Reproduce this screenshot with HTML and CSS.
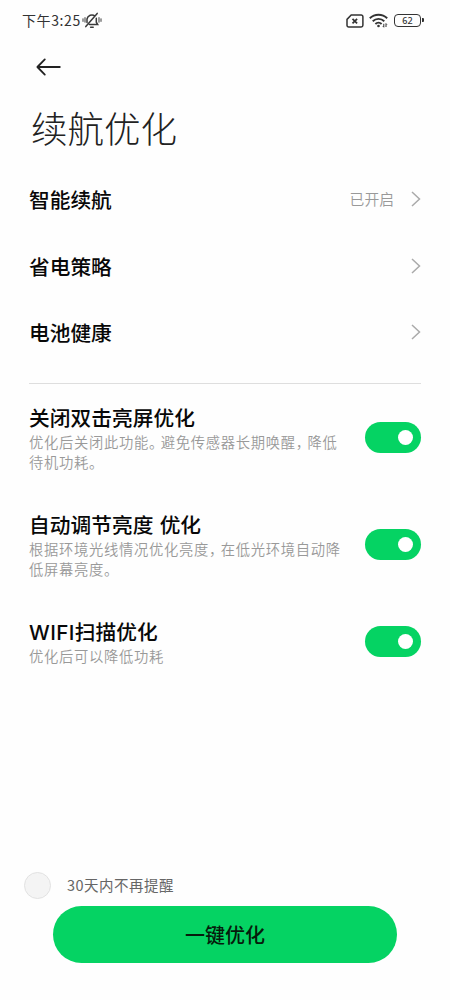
FILE: index.html
```html
<!DOCTYPE html>
<html lang="zh-CN">
<head>
<meta charset="utf-8">
<title>续航优化</title>
<link rel="stylesheet" href="styles.css">
</head>
<body>
<div class="screen">
  <header class="status">
    <span class="time">下午3:25</span>
    <svg class="bell" width="20" height="17" viewBox="0 0 20 17" fill="none" stroke="#3a3a3a" stroke-width="1.5" stroke-linecap="round">
      <path d="M5 10.5V7a5 5 0 0 1 8-3M14.3 6.2v4l1.4 2.4H7.5M3.8 14.6L15.2 1.4M8.6 15.2h2.6"/>
      <path d="M1 6.8v2.6M3 5.6v4.6M17 5.6v4.6M19 6.8v2.6" stroke-width="1"/>
    </svg>
    <div class="status-right">
      <svg width="18" height="14" viewBox="0 0 18 14" fill="none" stroke="#333" stroke-width="1.5">
        <path d="M5.2 1H15.2a1.7 1.7 0 0 1 1.7 1.7v8.5a1.7 1.7 0 0 1-1.7 1.7H2.7A1.7 1.7 0 0 1 1 11.200V5.400z"/>
        <path d="M6.500 4.800l4.600 4.600M11.100 4.800L6.500 9.400" stroke-width="1.7"/>
      </svg>
      <svg class="wifi" width="20" height="15" viewBox="0 0 20 15" fill="none" stroke="#333" stroke-width="1.9">
        <path d="M.8 5.200a12.500 12.500 0 0 1 17.400 0M3.700 8.200a8.500 8.500 0 0 1 11.600 0M6.400 11a4.500 4.500 0 0 1 6.200 0"/>
        <circle cx="9.500" cy="13" r="1.300" fill="#333" stroke="none"/>
        <path d="M14.800 10.800v3.400M17 10.600v3.400M13.900 13.200l.9 1M17 10.600l.9 1" stroke-width="1"/>
      </svg>
      <span class="battery">62</span>
    </div>
  </header>
  <svg class="back" width="26" height="18" viewBox="0 0 26 18" fill="none" stroke="#222" stroke-width="1.800" stroke-linecap="round" stroke-linejoin="round"><path d="M23.800 9H1.500M8.800 1.400L1.400 9L8.800 16.600"/></svg>
  <h1 class="title">续航优化</h1>
  <nav class="links">
    <a class="link"><span class="name">智能续航</span><span class="value">已开启</span><svg class="chevron" width="10" height="16" viewBox="0 0 10 16"><path d="M1 1L8.500 8L1 15"/></svg></a>
    <a class="link"><span class="name">省电策略</span><svg class="chevron" width="10" height="16" viewBox="0 0 10 16"><path d="M1 1L8.500 8L1 15"/></svg></a>
    <a class="link"><span class="name">电池健康</span><svg class="chevron" width="10" height="16" viewBox="0 0 10 16"><path d="M1 1L8.500 8L1 15"/></svg></a>
  </nav>
  <main class="options">
    <section class="option">
      <div class="copy"><h2 class="name">关闭双击亮屏优化</h2><p class="desc">优化后关闭此功能<span class="punct">。</span>避免传感器长期唤醒<span class="punct">，</span>降低<br>待机功耗。</p></div>
      <span class="toggle"></span>
    </section>
    <section class="option">
      <div class="copy"><h2 class="name">自动调节亮度 优化</h2><p class="desc">根据环境光线情况优化亮度<span class="punct">，</span>在低光环境自动降<br>低屏幕亮度。</p></div>
      <span class="toggle"></span>
    </section>
    <section class="option">
      <div class="copy"><h2 class="name"><span class="latin">WIFI</span>扫描优化</h2><p class="desc">优化后可以降低功耗</p></div>
      <span class="toggle"></span>
    </section>
  </main>
  <footer class="footer">
    <label class="remind"><span class="radio"></span><span>30天内不再提醒</span></label>
    <button class="primary">一键优化</button>
  </footer>
</div>
</body>
</html>
```
FILE: styles.css
```css
* { box-sizing: border-box; margin: 0; padding: 0; }
body { background: #fefefe; font-family: "Noto Sans CJK SC", sans-serif; color: #080808; }
.screen { width: 450px; height: 1000px; display: flex; flex-direction: column; }
svg { display: block; flex: none; }
.status { height: 41px; padding: 0 28px 0 22px; display: flex; align-items: center; flex: none; }
.time { font-size: 14px; letter-spacing: .6px; color: #333; line-height: 20px; padding-bottom: 2px; white-space: nowrap; }
.bell { margin-left: 1px; }
.status-right { margin-left: auto; display: flex; align-items: center; gap: 5px; }
.battery { position: relative; width: 27px; height: 13px; margin-right: 1px; border: 1.5px solid #333; border-radius: 4px; font: 500 9px/11px "Noto Sans", sans-serif; text-align: center; color: #333; }
.battery::after { content: ""; position: absolute; right: -3.5px; top: 3px; width: 2px; height: 4px; background: #333; border-radius: 0 1px 1px 0; }
.back { margin: 17px 0 0 36px; }
.title { margin: 26px 0 0 31px; height: 52px; font-size: 36.500px; font-weight: 300; line-height: 52px; color: #222; }
.links { margin: 12px 29px 0; padding-bottom: 17px; border-bottom: 1px solid #dedede; }
.link { height: 66.600px; display: flex; align-items: center; }
.name { font-size: 20.700px; font-weight: 500; line-height: 26px; height: 26px; white-space: nowrap; }
.value { margin-left: auto; margin-right: 17px; padding-bottom: 2px; font-size: 14.800px; font-weight: 350; color: #999; }
.chevron { margin-left: auto; fill: none; stroke: #aaa; stroke-width: 1.500; }
.value + .chevron { margin-left: 0; }
.options { margin: 20px 29px 0; display: flex; flex-direction: column; gap: 39px; }
.option { display: flex; justify-content: space-between; align-items: flex-start; }
.option .name { letter-spacing: .05px; word-spacing: 1.5px; }
.desc { margin-top: 2px; font-size: 14.300px; letter-spacing: .7px; font-weight: 350; line-height: 20px; color: #999; white-space: nowrap; }
.punct { letter-spacing: -2.500px; }
.latin { font-family: Inter, sans-serif; letter-spacing: .4px; }
.toggle { width: 56px; height: 31px; margin-top: 18px; padding-right: 8px; flex: none; border-radius: 16px; background: #05d363; display: flex; align-items: center; justify-content: flex-end; }
.toggle::after { content: ""; width: 15.500px; height: 15.500px; border-radius: 50%; background: #fff; }
.option:last-child .toggle { margin-top: 8px; }
.footer { margin-top: auto; padding: 0 53px 37px; }
.remind { margin-left: -29px; height: 27px; margin-bottom: 7px; display: flex; align-items: center; gap: 16px; font-size: 14.500px; letter-spacing: .5px; line-height: 20px; color: #666; }
.remind span:last-child { padding-bottom: 1px; }
.radio { width: 27px; height: 27px; border-radius: 50%; border: 1px solid #e2e2e2; background: #f4f4f4; }
.primary { display: block; width: 344px; height: 57px; border: 0; border-radius: 29px; background: #05d363; font: 500 20px/57px "Noto Sans CJK SC", sans-serif; color: #061c0c; }
```
